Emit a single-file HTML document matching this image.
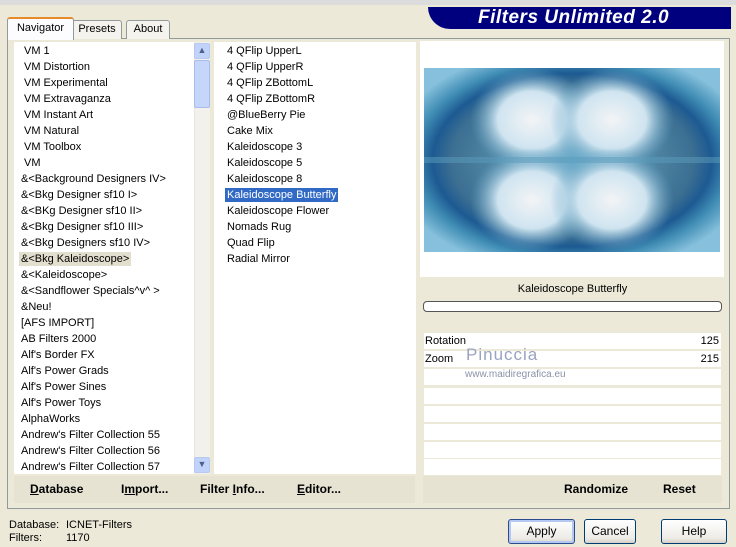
<!DOCTYPE html>
<html><head><meta charset="utf-8"><style>
*{margin:0;padding:0;box-sizing:border-box}
body{width:736px;height:547px;background:#ece9d8;font-family:"Liberation Sans",Tahoma,sans-serif;font-size:11px;color:#000;position:relative;overflow:hidden}
.a{position:absolute}
.topstrip{left:0;top:0;width:736px;height:5px;background:#dcdcdc}
.logo{left:428px;top:7px;width:303px;height:22px;background:#00007f;border-radius:0 0 0 22px/0 0 0 22px;color:#fff;font-weight:bold;font-style:italic;font-size:19px;line-height:22px;padding-left:50px;letter-spacing:0.5px}
.tab{top:20px;height:19px;border:1px solid #919b9c;border-bottom:none;background:#f4f3ee;text-align:center;line-height:17px;border-radius:3px 3px 0 0}
.panel{left:7px;top:38px;width:723px;height:471px;border:1px solid #919b9c;background:#ece9d8}
.list{background:#fff;top:42px;height:432px}
.list div{height:16px;line-height:16px;white-space:nowrap}
.sel{background:#e3dfcf}
.blue{background:#316ac5;color:#fff}
.bar{top:476px;height:27px;background:#e6e3d3;font-weight:bold;font-size:12px;line-height:27px}
.bar span{position:absolute}
.row{left:424px;width:297px;height:16px;background:#fff;line-height:16px}
.btn{top:519px;height:25px;border:1px solid #003c74;border-radius:3px;background:linear-gradient(#fff,#ecebe6 80%,#d6d0c5);text-align:center;line-height:23px;font-size:12px}
</style></head><body>
<div class="a topstrip"></div>
<div class="a logo">Filters Unlimited 2.0</div>
<div class="a panel"></div>
<div class="a tab" style="left:72px;width:50px">Presets</div>
<div class="a tab" style="left:126px;width:44px">About</div>
<div class="a tab" style="left:7px;width:67px;top:17px;height:23px;background:#fcfcfe;border-top:2px solid #e68b2c;line-height:19px;z-index:2">Navigator</div>

<div class="a list" style="left:14px;width:180px;padding-left:7px;padding-top:1px">
<div style="padding-left:3px">VM 1</div><div style="padding-left:3px">VM Distortion</div><div style="padding-left:3px">VM Experimental</div><div style="padding-left:3px">VM Extravaganza</div><div style="padding-left:3px">VM Instant Art</div><div style="padding-left:3px">VM Natural</div><div style="padding-left:3px">VM Toolbox</div><div style="padding-left:3px">VM</div>
<div>&amp;&lt;Background Designers IV&gt;</div><div>&amp;&lt;Bkg Designer sf10 I&gt;</div><div>&amp;&lt;BKg Designer sf10 II&gt;</div><div>&amp;&lt;Bkg Designer sf10 III&gt;</div><div>&amp;&lt;Bkg Designers sf10 IV&gt;</div>
<div><span class="sel" style="padding:1px 2px;margin-left:-2px">&amp;&lt;Bkg Kaleidoscope&gt;</span></div>
<div>&amp;&lt;Kaleidoscope&gt;</div><div>&amp;&lt;Sandflower Specials^v^ &gt;</div><div>&amp;Neu!</div><div>[AFS IMPORT]</div><div>AB Filters 2000</div><div>Alf's Border FX</div><div>Alf's Power Grads</div><div>Alf's Power Sines</div><div>Alf's Power Toys</div><div>AlphaWorks</div><div>Andrew's Filter Collection 55</div><div>Andrew's Filter Collection 56</div><div>Andrew's Filter Collection 57</div>
</div>
<div class="a" style="left:194px;top:42px;width:16px;height:432px;background:#f3f1ec;border-left:1px solid #e8e6dd"></div>
<div class="a" style="left:194px;top:43px;width:16px;height:16px;background:#c1d3fb;border:1px solid #b8c9ef;border-radius:2px;text-align:center;font-size:9px;line-height:13px;color:#4d6185">&#9650;</div>
<div class="a" style="left:194px;top:60px;width:16px;height:48px;background:#c6d6fb;border:1px solid #a8bdec;border-radius:2px"></div>
<div class="a" style="left:194px;top:457px;width:16px;height:16px;background:#c1d3fb;border:1px solid #b8c9ef;border-radius:2px;text-align:center;font-size:9px;line-height:13px;color:#4d6185">&#9660;</div>

<div class="a list" style="left:214px;width:202px;padding-left:13px;padding-top:1px">
<div>4 QFlip UpperL</div><div>4 QFlip UpperR</div><div>4 QFlip ZBottomL</div><div>4 QFlip ZBottomR</div><div>@BlueBerry Pie</div><div>Cake Mix</div><div>Kaleidoscope 3</div><div>Kaleidoscope 5</div><div>Kaleidoscope 8</div>
<div><span class="blue" style="padding:1px 2px;margin-left:-2px">Kaleidoscope Butterfly</span></div>
<div>Kaleidoscope Flower</div><div>Nomads Rug</div><div>Quad Flip</div><div>Radial Mirror</div>
</div>

<div class="a" style="left:420px;top:41px;width:304px;height:236px;background:#fff"></div>
<svg class="a" style="left:424px;top:68px" width="296" height="184" viewBox="0 0 296 184">
<defs>
<radialGradient id="bg" cx="50%" cy="50%" r="62%">
<stop offset="0" stop-color="#6aaccb"/><stop offset="0.5" stop-color="#4a7f9e"/><stop offset="0.66" stop-color="#3c6f92"/><stop offset="0.76" stop-color="#1d5a92"/><stop offset="0.86" stop-color="#3f8cb4"/><stop offset="1" stop-color="#86c0dc"/></radialGradient>
<radialGradient id="pt" cx="50%" cy="50%" r="50%"><stop offset="0" stop-color="#f2f4f6"/><stop offset="0.55" stop-color="#cfe4f0"/><stop offset="1" stop-color="#6aa8c8" stop-opacity="0"/></radialGradient>
</defs>
<rect width="296" height="184" fill="url(#bg)"/>
<ellipse cx="108" cy="52" rx="62" ry="52" fill="url(#pt)"/>
<ellipse cx="188" cy="52" rx="62" ry="52" fill="url(#pt)"/>
<ellipse cx="108" cy="132" rx="62" ry="52" fill="url(#pt)"/>
<ellipse cx="188" cy="132" rx="62" ry="52" fill="url(#pt)"/>
<rect x="0" y="89" width="296" height="6" fill="#5b9cbc" opacity=".5"/>
</svg>

<div class="a" style="left:424px;top:277px;width:297px;height:24px;background:#ece9d8;text-align:center;line-height:24px">Kaleidoscope Butterfly</div>
<div class="a" style="left:423px;top:301px;width:299px;height:11px;border:1px solid #555;border-radius:4px;background:#fff"></div>
<div class="a row" style="top:333px"><span style="position:absolute;left:1px">Rotation</span><span style="position:absolute;right:2px">125</span></div>
<div class="a row" style="top:351px"><span style="position:absolute;left:1px">Zoom</span><span style="position:absolute;right:2px">215</span></div>
<div class="a row" style="top:369px"></div>
<div class="a row" style="top:388px"></div>
<div class="a row" style="top:406px"></div>
<div class="a row" style="top:424px"></div>
<div class="a row" style="top:442px"></div>
<div class="a row" style="top:459px"></div>
<div class="a" style="left:466px;top:345px;font-size:17px;color:#9aa3c2;letter-spacing:1px">Pinuccia</div>
<div class="a" style="left:465px;top:369px;font-size:10px;color:#8b93a8">www.maidiregrafica.eu</div>

<div class="a bar" style="left:14px;width:401px"><span style="left:16px"><u>D</u>atabase</span><span style="left:107px">I<u>m</u>port...</span><span style="left:186px">Filter <u>I</u>nfo...</span><span style="left:283px"><u>E</u>ditor...</span></div>
<div class="a bar" style="left:423px;width:299px"><span style="left:141px">Randomize</span><span style="left:240px">Reset</span></div>

<div class="a" style="left:9px;top:519px;line-height:13px">Database:<br>Filters:</div>
<div class="a" style="left:66px;top:519px;line-height:13px">ICNET-Filters<br>1170</div>
<div class="a btn" style="left:508px;width:67px;border-color:#2d4a8a;box-shadow:inset 0 0 0 2px #b4c8f4">Apply</div>
<div class="a btn" style="left:584px;width:52px">Cancel</div>
<div class="a btn" style="left:661px;width:66px">Help</div>
</body></html>
